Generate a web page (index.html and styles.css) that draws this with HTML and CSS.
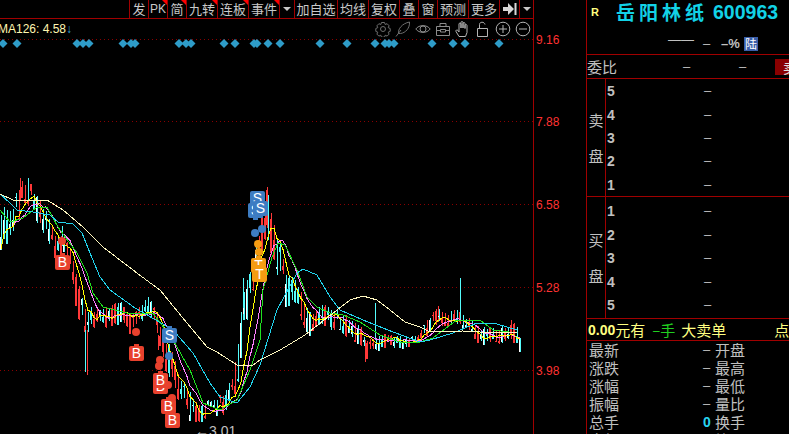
FILE: index.html
```html
<!DOCTYPE html>
<html lang="zh">
<head>
<meta charset="utf-8">
<title>岳阳林纸 600963</title>
<link rel="stylesheet" href="styles.css">
</head>
<body>
<div class="main">
  <nav class="toolbar">
    <span class="tb s">发</span>
    <span class="tb s flag pk">PK</span>
    <span class="tb s flag">简</span>
    <span class="tb m flag">九转</span>
    <span class="tb m flag">连板</span>
    <span class="tb m flag">事件</span>
    <span class="tb xs"><i class="caret"></i></span>
    <span class="tb l">加自选</span>
    <span class="tb m">均线</span>
    <span class="tb m">复权</span>
    <span class="tb s">叠</span>
    <span class="tb s">窗</span>
    <span class="tb m">预测</span>
    <span class="tb m">更多</span>
    <span class="tb a">
      <svg class="collapse" width="14" height="12" viewBox="0 0 14 12"><path d="M0 4h5V0l6 6-6 6V8H0z"/><rect x="11.500" y="0" width="2" height="12"/></svg>
    </span>
    <span class="tb xs last"><i class="caret"></i></span>
  </nav>
  <div class="plot">
    <div class="canvas" id="canvas">
      <svg class="chart" id="chart" width="533" height="415" viewBox="0 19 533 415"></svg>
      <div class="ma-label">MA126: 4.58<span class="ma-arrow">↓</span></div>
      <div class="tools">
        <svg class="ico dim" viewBox="0 0 16 16"><path d="M6.500 1.500h3l.7 2 1.900-.8 2 2.100-.9 1.800 2 .9v2.900l-2 .8.9 1.900-2 2-1.900-.9-.7 2h-3l-.7-2-1.900.9-2-2 .9-1.900-2-.8V7.500l2-.9-.9-1.800 2-2.100 1.900.8z"/><circle cx="8" cy="8" r="2.500"/></svg>
        <svg class="ico dim" viewBox="0 0 16 16"><path d="M1 15.500 6 9M3.500 12.500C2.800 8 7 2.500 14.500 1c.5 6-4 11-9 11.500z"/></svg>
        <svg class="ico" viewBox="0 0 16 16"><path d="M.8 8C4 3.500 12 3.500 15.200 8 12 12.500 4 12.500.8 8z"/><circle cx="8" cy="8" r="3"/></svg>
        <svg class="ico" viewBox="0 0 16 16"><path d="M1.500 5.500h13v9h-13zM5 5.500V2.500h6v3M1.500 9.500h4M10.500 9.500h4M5.500 8.500h5v2.500h-5z"/></svg>
        <svg class="ico lit" viewBox="0 0 16 16"><path d="M4 15.500 1 10.500c-.5-1.500 1-2 2-1l1 1.500V3c0-1.300 2-1.300 2 0v4-5.500c0-1.300 2-1.300 2 0V7V2.500c0-1.300 2-1.300 2 0V7.500V4.500c0-1.300 2-1.300 2 0v7l-1.500 4z"/></svg>
        <svg class="ico lit" viewBox="0 0 16 16"><path d="M2.500 7.500h10v8h-10zM4.500 7.500V3.500c0-3 5-3 5.500 0"/></svg>
        <svg class="ico lit" viewBox="0 0 16 16"><circle cx="8" cy="8" r="6.800"/><path d="M4 8h8M8 4v8"/></svg>
        <svg class="ico lit" viewBox="0 0 16 16"><circle cx="8" cy="8" r="6.800"/><path d="M4 8h8"/></svg>
      </div>
      <div class="low">←3.01</div>
    </div>
    <div class="axis" id="axis"></div>
  </div>
</div>

<aside class="side">
  <header class="quote">
    <div class="title-row">
      <span class="r-mark">R</span>
      <h1 class="name">岳阳林纸</h1>
      <span class="code">600963</span>
    </div>
    <div class="sub-row">
      <span class="sub-price">——</span>
      <span class="sub-chg">–</span>
      <span class="sub-pct">–%</span>
      <span class="lu">陆</span>
    </div>
  </header>

  <div class="ratio">
    <span class="ratio-label">委比</span>
    <span class="ratio-a">–</span>
    <span class="ratio-b">–</span>
    <span class="sell-btn">卖</span>
  </div>

  <section class="book sell-side">
    <div class="book-label"><span>卖</span><span>盘</span></div>
    <div class="levels">
      <div class="level"><b>5</b><span>–</span></div>
      <div class="level"><b>4</b><span>–</span></div>
      <div class="level"><b>3</b><span>–</span></div>
      <div class="level"><b>2</b><span>–</span></div>
      <div class="level"><b>1</b><span>–</span></div>
    </div>
  </section>

  <section class="book buy-side">
    <div class="book-label"><span>买</span><span>盘</span></div>
    <div class="levels">
      <div class="level"><b>1</b><span>–</span></div>
      <div class="level"><b>2</b><span>–</span></div>
      <div class="level"><b>3</b><span>–</span></div>
      <div class="level"><b>4</b><span>–</span></div>
      <div class="level"><b>5</b><span>–</span></div>
    </div>
  </section>

  <div class="flow">
    <b class="flow-num">0.00</b><span class="flow-unit">元有</span>
    <span class="flow-hand">–手</span>
    <span class="flow-big">大卖单</span>
    <span class="flow-pt">点</span>
  </div>

  <dl class="stats">
    <div class="stat"><dt>最新</dt><dd>–</dd><dt>开盘</dt></div>
    <div class="stat"><dt>涨跌</dt><dd>–</dd><dt>最高</dt></div>
    <div class="stat"><dt>涨幅</dt><dd>–</dd><dt>最低</dt></div>
    <div class="stat"><dt>振幅</dt><dd>–</dd><dt>量比</dt></div>
    <div class="stat"><dt>总手</dt><dd class="zero">0</dd><dt>换手</dt></div>
    <div class="stat"><dt>金额</dt><dd>–</dd><dt>均价</dt></div>
  </dl>
</aside>
<script src="chart.js"></script>
</body>
</html>
```

FILE: styles.css
```css
* { box-sizing: border-box; margin: 0; padding: 0; }
html, body { width: 789px; height: 434px; overflow: hidden; background: #000; }
body {
  display: flex;
  color: #c0c0c0;
  font-family: "Noto Sans CJK SC", "Liberation Sans", sans-serif;
}

/* left: toolbar + chart */
.main { width: 586px; height: 434px; display: flex; flex-direction: column; flex: none; }
.toolbar {
  width: 534px;
  height: 19px;
  display: flex;
  justify-content: flex-end;
  border-bottom: 1px solid #a00000;
  flex: none;
}
.tb {
  position: relative;
  display: flex;
  align-items: center;
  justify-content: center;
  height: 18px;
  border-left: 1px solid #a00000;
  font-size: 13px;
  line-height: 18px;
  color: #c8c8c8;
  overflow: hidden;
  flex: none;
}
.tb.s { width: 19px; }
.tb.m { width: 31px; }
.tb.l { width: 43px; }
.tb.xs { width: 15px; }
.tb.a { width: 20px; }
.tb.last { border-right: 1px solid #a00000; }
.pk { font-family: "Liberation Sans", sans-serif; font-size: 12px; }
.flag::after {
  content: "";
  position: absolute;
  top: 0;
  right: 0;
  border-top: 5px solid #ff0000;
  border-left: 5px solid transparent;
}
.caret {
  display: block;
  border-top: 4px solid #c8c8c8;
  border-left: 4px solid transparent;
  border-right: 4px solid transparent;
}
.collapse { fill: #d8d8d8; display: block; }

.plot { flex: 1; display: flex; min-height: 0; }
.canvas { position: relative; width: 533px; overflow: hidden; flex: none; }
.chart { position: absolute; left: 0; top: 0; display: block; }
.ma-label {
  position: absolute;
  left: -2px;
  top: 2px;
  font: 12px/16px "Liberation Sans", sans-serif;
  color: #fff6b0;
  white-space: nowrap;
}
.ma-arrow { color: #35a5d6; margin-left: 0; }
.tools {
  position: absolute;
  right: 2px;
  top: 2px;
  display: flex;
  gap: 4px;
}
.ico {
  display: block;
  width: 16px;
  height: 16px;
  fill: none;
  stroke: #8c8c8c;
  stroke-width: 1;
}
.ico.dim { stroke: #6e6e6e; }
.ico.lit { stroke: #b4b4b4; }
.low {
  position: absolute;
  left: 195px;
  top: 403px;
  font: 14px/18px "Liberation Sans", sans-serif;
  color: #c0c0c0;
  white-space: nowrap;
}
.badge {
  position: absolute;
  width: 15px;
  height: 15px;
  margin: -7px 0 0 -7px;
  border-radius: 2px;
  color: #fff;
  font: 14px/15px "Liberation Sans", sans-serif;
  text-align: center;
}
.badge::before {
  content: "";
  position: absolute;
  left: 5px;
  top: -2px;
  width: 5px;
  height: 3px;
  background: inherit;
}
.badge.down::before { top: 14px; }
.badge.b { background: #e8412d; }
.badge.s { background: #3d7cc2; }
.badge.t { background: #f59c12; }
.dot {
  position: absolute;
  width: 8px;
  height: 8px;
  margin: -4px 0 0 -4px;
  border-radius: 50%;
}
.dot.b { background: #e8412d; }
.dot.s { background: #3d7cc2; }
.dot.t { background: #f59c12; }

.axis { position: relative; flex: 1; border-left: 1px solid #a00000; }
.tick {
  position: absolute;
  left: 2px;
  margin-top: -7px;
  font: 12px/16px "Liberation Sans", sans-serif;
  color: #ff3232;
}

/* right: quote panel */
.side {
  flex: 1;
  min-width: 0;
  height: 434px;
  display: flex;
  flex-direction: column;
  border-left: 1px solid #a00000;
  overflow: hidden;
}
.quote { height: 55px; flex: none; border-bottom: 1px solid #a00000; position: relative; }
.title-row { height: 24px; display: flex; align-items: center; }
.r-mark { margin-left: 4px; width: 25px; font: bold 11px/14px "Liberation Sans", sans-serif; color: #ffff80; flex: none; }
.name { font-size: 19px; font-weight: 700; line-height: 24px; letter-spacing: 4px; color: #12d2e6; flex: none; }
.code { margin-left: 5px; font: bold 19.500px/24px "Liberation Sans", sans-serif; color: #12d2e6; flex: none; }
.sub-row { display: flex; align-items: center; height: 20px; margin-top: 10px; font: 13px/14px "Liberation Sans", sans-serif; }
.sub-price { margin-left: 81px; width: 35px; position: relative; top: -4px; flex: none; }
.sub-chg { width: 18px; flex: none; }
.sub-pct { width: 23px; font-weight: 700; flex: none; }
.lu { width: 14px; height: 14px; background: #3a5ea8; color: #fff; font: 12px/14px "Noto Sans CJK SC", sans-serif; text-align: center; flex: none; }

.ratio { height: 24px; flex: none; display: flex; align-items: center; border-bottom: 1px solid #a00000; position: relative; font-size: 15px; }
.ratio-label { width: 96px; flex: none; }
.ratio-a { width: 56px; flex: none; font-family: "Liberation Sans", sans-serif; font-size: 13px; }
.ratio-b { width: 36px; flex: none; font-family: "Liberation Sans", sans-serif; font-size: 13px; }
.sell-btn { width: 30px; height: 16px; flex: none; padding-left: 8px; background: #8a0000; color: #e0e0e0; font-size: 14px; line-height: 16px; overflow: hidden; }

.book { display: flex; flex: none; border-bottom: 1px solid #a00000; }
.sell-side { height: 118px; }
.buy-side { height: 122px; }
.book-label {
  width: 19px;
  flex: none;
  border-right: 1px solid #a00000;
  display: flex;
  flex-direction: column;
  align-items: center;
  justify-content: center;
  gap: 16px;
  font-size: 15px;
  line-height: 20px;
}
.levels { flex: 1; display: flex; flex-direction: column; justify-content: center; }
.level { height: 23.500px; display: flex; align-items: center; font: 14px/20px "Liberation Sans", sans-serif; padding-top: 1px; }
.level b { width: 98px; padding-left: 1px; flex: none; }
.level span { font-weight: 400; font-size: 13px; }

.flow { height: 22px; flex: none; display: flex; align-items: center; border-bottom: 1px solid #a00000; color: #ffff80; font-size: 15px; white-space: nowrap; }
.flow-num { font: bold 14px/20px "Liberation Sans", sans-serif; margin-left: 1px; flex: none; }
.flow-unit { width: 37px; flex: none; }
.flow-hand { width: 29px; color: #20d020; flex: none; }
.flow-big { width: 93px; flex: none; }
.flow-pt { flex: none; }

.stats { flex: 1; overflow: hidden; }
.stat { height: 18px; display: flex; align-items: center; font-size: 15px; line-height: 18px; }
.stat dt:first-child { width: 116px; padding-left: 2px; flex: none; }
.stat dd { width: 12px; flex: none; font: 13px/18px "Liberation Sans", sans-serif; }
.stat .zero { font-weight: 700; font-size: 14px; color: #28d4f0; }
```

FILE: chart.js
```js
(function () {
  var NS = 'http://www.w3.org/2000/svg';
  var svg = document.getElementById('chart');
  var canvas = document.getElementById('canvas');
  var axis = document.getElementById('axis');
  var PLOT_TOP = 19;

  function el(name, attrs) {
    var n = document.createElementNS(NS, name);
    for (var k in attrs) n.setAttribute(k, attrs[k]);
    svg.appendChild(n);
    return n;
  }

  // price grid
  [[39, '9.16'], [121, '7.88'], [204, '6.58'], [287, '5.28'], [370, '3.98']].forEach(function (t) {
    el('path', { d: 'M0 ' + (t[0] + 0.5) + 'H533', stroke: '#8a0000', 'stroke-dasharray': '1 3', fill: 'none', 'shape-rendering': 'crispEdges' });
    var d = document.createElement('div');
    d.className = 'tick';
    d.style.top = (t[0] - PLOT_TOP) + 'px';
    d.textContent = t[1];
    axis.appendChild(d);
  });

  // signal diamonds
  [3, 17, 77, 83, 89, 123, 131, 135, 179, 186, 191, 224, 235, 254, 257, 268, 280, 320, 347, 375, 385, 389, 394, 432, 453, 465, 499].forEach(function (x) {
    el('path', { d: 'M' + (x - 4.5) + ' 43.500l4.500-4.500 4.500 4.500-4.500 4.500z', fill: '#2e9cc8' });
  });

  // price envelope: x, top, bottom
  var env = [[0, 212, 250], [5, 208, 245], [10, 215, 240], [15, 195, 225], [20, 182, 215], [25, 184, 205], [30, 188, 215], [38, 200, 226], [45, 212, 240], [55, 238, 262], [62, 236, 256], [70, 250, 272], [75, 275, 305], [80, 298, 330], [86, 318, 355], [90, 310, 326], [100, 312, 326], [110, 308, 326], [120, 304, 320], [130, 318, 336], [140, 305, 322], [148, 296, 316], [155, 315, 332], [160, 330, 360], [170, 350, 385], [180, 383, 405], [190, 395, 418], [197, 405, 423], [205, 404, 416], [215, 398, 412], [222, 398, 415], [230, 383, 400], [236, 350, 392], [242, 295, 340], [250, 268, 300], [258, 238, 270], [262, 212, 250], [267, 200, 238], [272, 222, 265], [278, 240, 285], [285, 275, 305], [295, 283, 305], [303, 300, 332], [310, 318, 335], [320, 305, 322], [330, 310, 330], [340, 316, 335], [350, 320, 336], [360, 330, 346], [366, 342, 356], [372, 340, 353], [385, 337, 346], [400, 339, 350], [415, 338, 345], [425, 324, 336], [435, 310, 326], [445, 314, 326], [455, 311, 323], [465, 318, 328], [470, 318, 332], [480, 330, 345], [495, 330, 343], [505, 328, 340], [515, 325, 340], [519, 340, 350]];

  function at(x, i) {
    for (var k = 1; k < env.length; k++) {
      if (x <= env[k][0]) {
        var a = env[k - 1], b = env[k], f = (x - a[0]) / (b[0] - a[0]);
        return a[i] + (b[i] - a[i]) * f;
      }
    }
    return env[env.length - 1][i];
  }

  var seed = 20231;
  function rnd() {
    seed = (seed * 16807) % 2147483647;
    return seed / 2147483647;
  }

  var red = '', cyan = '', white = '', closes = [], xs = [];
  for (var x = 0; x <= 519; x += 3) {
    var top = at(x, 1) - rnd() * 4, bot = at(x, 2) + rnd() * 4, h = bot - top;
    var o = top + rnd() * h, c = top + rnd() * h;
    var bt = Math.round(Math.min(o, c)), bb = Math.round(Math.max(o, c)) + 1;
    var wt = Math.round(top + rnd() * (bt - top) * 0.3), wb = Math.round(bb + rnd() * (bot - bb) * 0.6);
    var up = rnd() < 0.5;
    var seg = 'M' + (x + 1.5) + ' ' + wt + 'V' + wb + 'M' + (x + 0.5) + ' ' + bt + 'V' + bb;
    if (up) red += seg; else cyan += seg;
    if (!up && rnd() < 0.6) white += 'M' + (x + 0.5) + ' ' + bt + 'V' + bb;
    closes.push(c);
    xs.push(x + 1);
  }
  // single long shadows
  red += 'M87.500 330V375M365.500 340V362M267.500 187V215M20.500 178V200M60.500 240V258M158.500 335V350M266.500 190V225M438.500 306V322M511.500 320V335';
  cyan += 'M460.500 278V320M62.500 226V246M243.500 278V320M28.500 178V200M268.500 195V240M519.500 340V350M375.500 303V340M85.500 330V372';

  el('path', { d: red, stroke: '#ff3838', fill: 'none', 'shape-rendering': 'crispEdges' });
  el('path', { d: cyan, stroke: '#54fcfc', fill: 'none', 'shape-rendering': 'crispEdges' });
  el('path', { d: white, stroke: '#ffffff', fill: 'none', 'shape-rendering': 'crispEdges' });

  function line(points, color) {
    el('polyline', { points: points, fill: 'none', stroke: color, 'stroke-width': 1, 'shape-rendering': 'crispEdges' });
  }
  function trailing(n) {
    var out = [];
    for (var i = 0; i < closes.length; i++) {
      var s = 0, m = 0;
      for (var j = Math.max(0, i - n + 1); j <= i; j++) { s += closes[j]; m++; }
      out.push(xs[i] + ',' + (s / m).toFixed(1));
    }
    return out.join(' ');
  }

  line(trailing(9), '#ff80ff');
  line(trailing(5), '#ffff00');
  // MA30
  line('0,210 10,222 23,218 37,207 47,207 58,227 77,253 87,273 93,293 103,307 127,313 153,313 173,340 190,370 203,403 220,410 237,400 250,370 260,340 263,290 272,257 278,243 285,245 297,270 307,297 317,307 330,313 343,315 360,322 380,335 400,342 420,342 433,338 457,320 480,320 493,330 517,333', '#20e020');
  // MA60
  line('0,194 10,203 17,210 33,212 50,215 58,222 73,224 82,233 90,253 100,277 110,290 135,308 173,330 193,353 210,383 220,397 237,403 250,387 260,365 277,310 297,273 303,269 317,275 330,297 340,310 363,320 393,332 420,342 430,340 453,333 477,323 497,324 517,330', '#22d4ee');
  // MA126
  line('0,194 13,200 47,200 63,210 83,227 103,247 133,270 153,285 160,290 187,323 207,347 217,352 237,365 253,365 260,360 280,350 305,335 337,310 350,300 363,296 377,300 390,310 405,322 420,327 430,332 463,331 480,332 517,332', '#fff8c0');

  // trade markers
  function mark(kind, sort, label, px, py, down) {
    var d = document.createElement('div');
    d.className = (kind === 'dot' ? 'dot ' : 'badge ' + (down ? 'down ' : '')) + sort;
    d.style.left = px + 'px';
    d.style.top = (py - PLOT_TOP) + 'px';
    if (label) d.textContent = label;
    canvas.appendChild(d);
  }
  [[62, 241, 'b'], [136, 332, 'b'], [160, 360, 'b'], [159, 366, 'b'], [168, 385, 'b'], [172, 398, 'b'],
   [169, 356, 's'], [255, 233, 's'], [262, 229, 's'], [258, 244, 't'], [259, 252, 't']].forEach(function (m) {
    mark('dot', m[2], '', m[0], m[1]);
  });
  [['b', 'B', 62, 262], ['b', 'B', 136, 353], ['b', 'B', 160, 386], ['b', 'B', 160, 380], ['b', 'B', 168, 406], ['b', 'B', 172, 420],
   ['s', 'S', 169, 335], ['s', 'S', 257, 198, 1], ['s', 'S', 255, 210, 1], ['s', 'S', 260, 208, 1], ['t', 'T', 258, 265], ['t', 'T', 259, 274]].forEach(function (m) {
    mark('badge', m[0], m[1], m[2], m[3], m[4]);
  });
})();
```
